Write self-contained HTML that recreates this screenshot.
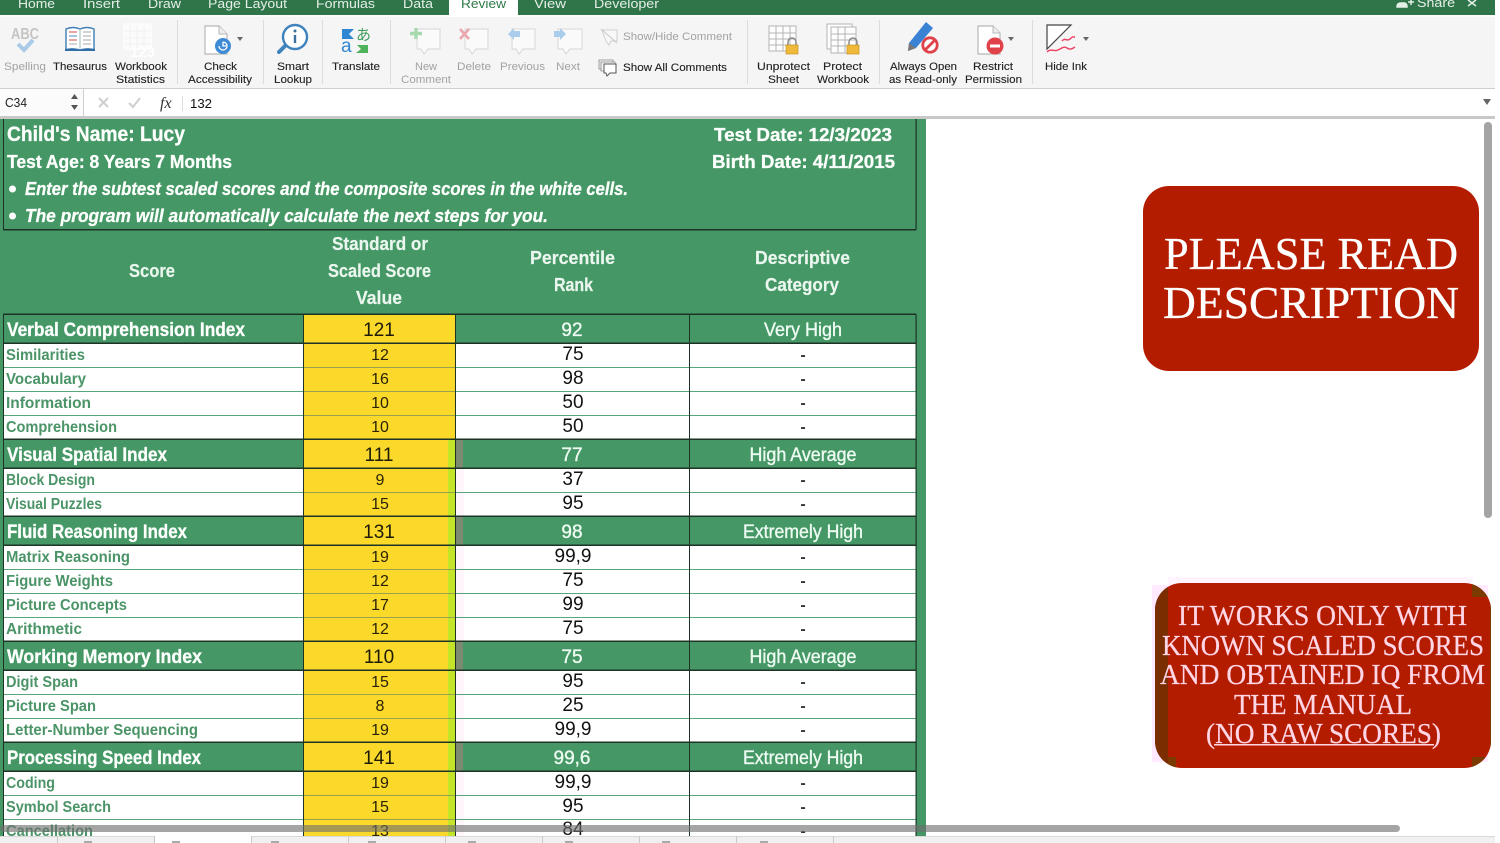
<!DOCTYPE html>
<html><head><meta charset="utf-8"><title>Workbook</title>
<style>
html,body{margin:0;padding:0;background:#fff;width:1500px;height:843px;overflow:hidden}
svg{display:block;position:absolute;left:0;top:0}
text{font-family:"Liberation Sans",sans-serif;white-space:pre}
.t{font-size:13px;fill:#e4efe7;font-weight:400}
.r{font-size:11px;fill:#222;stroke:#222;stroke-width:.12px}
.d{font-size:11px;fill:#a2a2a2}
.w{font-weight:700;fill:#fdfffd;stroke:#fdfffd;stroke-width:.3px}
.h{fill:#eaf6ee;stroke:#eaf6ee;stroke-width:.2px}
.g{font-size:19px;font-weight:700;fill:#fdfffd;stroke:#fdfffd;stroke-width:.3px}
.gm{font-size:19px;fill:#eefbf2;stroke:#eefbf2;stroke-width:.35px;text-anchor:middle}
.v{font-size:19px;fill:#1c1a08;text-anchor:middle}
.s{font-size:16px;font-weight:700;fill:#4b9467}
.n{font-size:16px;fill:#2a2208;text-anchor:middle}
.p{font-size:19px;fill:#111;text-anchor:middle}
.m{font-size:16px;font-weight:700;fill:#333;text-anchor:middle}
.se{font-family:"Liberation Serif",serif}
</style></head>
<body>
<svg width="1500" height="843" viewBox="0 0 1500 843" xmlns="http://www.w3.org/2000/svg">
<defs><clipPath id="c2"><rect x="1155" y="583" width="336" height="185" rx="27"/></clipPath></defs>
<g style="filter:blur(.35px)">
<!-- title bar -->
<rect x="0" y="0" width="1495" height="15" fill="#30754a"/>
<rect x="449" y="0" width="69" height="16" fill="#fff"/>
<text class="t" x="18" y="8" textLength="37" lengthAdjust="spacingAndGlyphs">Home</text>
<text class="t" x="83" y="8" textLength="37" lengthAdjust="spacingAndGlyphs">Insert</text>
<text class="t" x="148" y="8" textLength="33" lengthAdjust="spacingAndGlyphs">Draw</text>
<text class="t" x="208" y="8" textLength="79" lengthAdjust="spacingAndGlyphs">Page Layout</text>
<text class="t" x="316" y="8" textLength="59" lengthAdjust="spacingAndGlyphs">Formulas</text>
<text class="t" x="403" y="8" textLength="30" lengthAdjust="spacingAndGlyphs">Data</text>
<text class="t" x="461" y="8" textLength="45" lengthAdjust="spacingAndGlyphs" style="fill:#2f7a4a">Review</text>
<text class="t" x="534" y="8" textLength="32" lengthAdjust="spacingAndGlyphs">View</text>
<text class="t" x="594" y="8" textLength="65" lengthAdjust="spacingAndGlyphs">Developer</text>
<text class="t" x="1417" y="7" textLength="38" lengthAdjust="spacingAndGlyphs">Share</text>
<path d="M1397 7q0-4 4-4h3q3 0 3 4zM1408 2h6M1411 -1v6" fill="#e4efe7" stroke="#e4efe7" stroke-width="1.5"/>
<path d="M1468 0l8 6M1476 0l-8 6" stroke="#e4efe7" stroke-width="1.5" fill="none"/>

<!-- ribbon -->
<rect x="0" y="15" width="1495" height="2" fill="#fbfbfb"/>
<rect x="449" y="15" width="69" height="2" fill="#fff"/>
<rect x="0" y="17" width="1495" height="71" fill="#f5f5f5"/>
<rect x="0" y="88" width="1495" height="1" fill="#cfcfcf"/>
<g fill="#dcdcdc">
<rect x="177" y="20" width="1" height="64"/><rect x="263" y="20" width="1" height="64"/><rect x="322" y="20" width="1" height="64"/><rect x="390" y="20" width="1" height="64"/><rect x="747" y="20" width="1" height="64"/><rect x="879" y="20" width="1" height="64"/><rect x="1032" y="20" width="1" height="64"/>
</g>
<!-- ribbon labels -->
<text class="d" x="4" y="70" textLength="42" lengthAdjust="spacingAndGlyphs">Spelling</text>
<text class="r" x="53" y="70" textLength="54" lengthAdjust="spacingAndGlyphs">Thesaurus</text>
<text class="r" x="115" y="70" textLength="52" lengthAdjust="spacingAndGlyphs">Workbook</text>
<text class="r" x="116" y="83" textLength="49" lengthAdjust="spacingAndGlyphs">Statistics</text>
<text class="r" x="204" y="70" textLength="33" lengthAdjust="spacingAndGlyphs">Check</text>
<text class="r" x="188" y="83" textLength="64" lengthAdjust="spacingAndGlyphs">Accessibility</text>
<text class="r" x="277" y="70" textLength="32" lengthAdjust="spacingAndGlyphs">Smart</text>
<text class="r" x="274" y="83" textLength="38" lengthAdjust="spacingAndGlyphs">Lookup</text>
<text class="r" x="332" y="70" textLength="48" lengthAdjust="spacingAndGlyphs">Translate</text>
<text class="d" x="415" y="70" textLength="22" lengthAdjust="spacingAndGlyphs">New</text>
<text class="d" x="401" y="83" textLength="50" lengthAdjust="spacingAndGlyphs">Comment</text>
<text class="d" x="457" y="70" textLength="34" lengthAdjust="spacingAndGlyphs">Delete</text>
<text class="d" x="500" y="70" textLength="45" lengthAdjust="spacingAndGlyphs">Previous</text>
<text class="d" x="556" y="70" textLength="24" lengthAdjust="spacingAndGlyphs">Next</text>
<text class="d" x="623" y="40" textLength="109" lengthAdjust="spacingAndGlyphs">Show/Hide Comment</text>
<text class="r" x="623" y="71" textLength="104" lengthAdjust="spacingAndGlyphs">Show All Comments</text>
<text class="r" x="757" y="70" textLength="53" lengthAdjust="spacingAndGlyphs">Unprotect</text>
<text class="r" x="768" y="83" textLength="31" lengthAdjust="spacingAndGlyphs">Sheet</text>
<text class="r" x="823" y="70" textLength="39" lengthAdjust="spacingAndGlyphs">Protect</text>
<text class="r" x="817" y="83" textLength="52" lengthAdjust="spacingAndGlyphs">Workbook</text>
<text class="r" x="890" y="70" textLength="67" lengthAdjust="spacingAndGlyphs">Always Open</text>
<text class="r" x="889" y="83" textLength="68" lengthAdjust="spacingAndGlyphs">as Read-only</text>
<text class="r" x="973" y="70" textLength="40" lengthAdjust="spacingAndGlyphs">Restrict</text>
<text class="r" x="965" y="83" textLength="57" lengthAdjust="spacingAndGlyphs">Permission</text>
<text class="r" x="1045" y="70" textLength="42" lengthAdjust="spacingAndGlyphs">Hide Ink</text>

<!-- Spelling icon -->
<text x="11" y="39" font-size="16" font-weight="700" fill="#c4c4c4" textLength="28" lengthAdjust="spacingAndGlyphs">ABC</text>
<path d="M18 44l6 6 9-10" fill="none" stroke="#a9cbe8" stroke-width="4"/>
<!-- Thesaurus -->
<path d="M66 29q7-3 14 0q7-3 14 0v21q-7-2-14 0q-7-2-14 0z" fill="#fff" stroke="#3f7fb5" stroke-width="1.400"/>
<path d="M65 49q8-2 15 1q7-3 15-1v2H65z" fill="#2f6ea6"/>
<path d="M80 29v20" stroke="#9bb" stroke-width="1"/>
<path d="M69 32h8" stroke="#d66" stroke-width="1.200"/><path d="M69 36h8" stroke="#6a9fd0" stroke-width="1.200"/><path d="M69 40h8" stroke="#d66" stroke-width="1.200"/><path d="M69 44h8" stroke="#b9b9b9" stroke-width="1.200"/>
<path d="M83 32h8M83 36h8M83 40h8M83 44h8" stroke="#b9b9b9" stroke-width="1.200"/>
<!-- Workbook stats (washed out) -->
<rect x="123" y="23" width="29" height="27" rx="3" fill="#fbfbfb"/>
<path d="M130 26v22M137 26v22M144 26v22M125 31h25M125 38h25M125 44h25" stroke="#f0f0f0" stroke-width="1"/>
<text x="130" y="57" font-size="15" font-weight="700" fill="#fff">123</text>
<!-- Accessibility -->
<path d="M205 26h14l8 8v20h-22z" fill="#fff" stroke="#b8b8b8" stroke-width="1.200"/>
<path d="M219 26v8h8" fill="#eee" stroke="#b8b8b8" stroke-width="1"/>
<circle cx="223" cy="46" r="8" fill="#3d8ad6"/>
<path d="M219 46a4 4 0 1 0 4-4M223 42v4h3" stroke="#fff" stroke-width="1.300" fill="none"/>
<path d="M237 37h6l-3 4z" fill="#666"/>
<!-- Smart Lookup -->
<circle cx="295" cy="37" r="12" fill="#fff" stroke="#3f83bd" stroke-width="2.400"/>
<path d="M285 46l-6 6" stroke="#3f83bd" stroke-width="4" stroke-linecap="round"/>
<circle cx="295" cy="31" r="1.500" fill="#3b6f9e"/><path d="M295 35v8" stroke="#3b6f9e" stroke-width="2.400"/>
<!-- Translate -->
<path d="M342 29h12l-5 5 5 5h-12z" fill="#2f86d3"/>
<text x="341" y="52" font-size="19" fill="#2f86d3">a</text>
<text x="356" y="40" font-size="15" fill="#3c9c5a" style="font-family:'Noto Sans CJK JP',sans-serif">あ</text>
<path d="M368 45v8h-12l5-4-4-4z" fill="#4fb35c"/>
<!-- Comment icons -->
<g fill="#fafafa" stroke="#d6d6d6" stroke-width="1">
<path d="M417 29h23v20h-12l-4 5-3-5h-4z"/>
<path d="M465 29h23v20h-12l-4 5-3-5h-4z"/>
<path d="M512 29h23v20h-12l-4 5-3-5h-4z"/>
<path d="M558 29h24v20h-12l-4 5-3-5h-5z"/>
</g>
<path d="M416 28v11M410 33.500h12" stroke="#a8d8ae" stroke-width="3.400"/>
<path d="M460 29l9 10M469 29l-9 10" stroke="#eba5ac" stroke-width="2.600"/>
<path d="M508 34l6-6v3h6v6h-6v3z" fill="#abcdec"/>
<path d="M566 34l-6-6v3h-6v6h6v3z" fill="#abcdec"/>
<!-- show/hide -->
<path d="M602 30h15v11h-6l-2 4-3-4z" fill="#f8f8f8" stroke="#cfcfcf"/>
<path d="M601 29l16 14" stroke="#c8c8c8"/>
<path d="M599 60h14v9h-14z" fill="#f4f4f4" stroke="#888" stroke-width=".8"/>
<path d="M601 62h14v9h-14z" fill="#f4f4f4" stroke="#888" stroke-width=".8"/>
<path d="M604 64h12v9h-6l-3 3-1-3h-2z" fill="#fff" stroke="#555" stroke-width="1"/>
<!-- Unprotect -->
<g fill="#fdfdfd" stroke="#b5b5b5" stroke-width="1">
<rect x="769" y="26" width="27" height="25"/>
<path d="M769 33h27M769 39h27M769 45h27M776 26v25M783 26v25M790 26v25" fill="none"/>
<rect x="827" y="24" width="25" height="25"/>
<rect x="831" y="27" width="25" height="26"/>
<path d="M831 34h25M831 40h25M831 46h25M838 27v26M845 27v26" fill="none"/>
</g>
<path d="M788 46v-4a4 4 0 0 1 8 0v4" fill="none" stroke="#888" stroke-width="1.500"/>
<rect x="786" y="45" width="12" height="9" fill="#f0b93a" stroke="#c89522" stroke-width=".7"/>
<path d="M849 46v-4a4 4 0 0 1 8 0v4" fill="none" stroke="#888" stroke-width="1.500"/>
<rect x="847" y="45" width="12" height="9" fill="#f0b93a" stroke="#c89522" stroke-width=".7"/>
<!-- Always open -->
<path d="M909 43l-1 8 8-3 17-20-7-6z" fill="#3a82d4"/>
<path d="M909 43l-1 8 8-3z" fill="#777"/>
<circle cx="930" cy="45" r="7.200" fill="#fff" stroke="#e0424a" stroke-width="2.800"/>
<path d="M925 50l10-10" stroke="#e0424a" stroke-width="2.800"/>
<!-- Restrict -->
<path d="M978 26h15l7 7v21h-22z" fill="#fff" stroke="#b8b8b8" stroke-width="1.200"/>
<path d="M993 26v7h7" fill="#eee" stroke="#b8b8b8"/>
<circle cx="995" cy="46" r="8.500" fill="#e0424a"/>
<rect x="990" y="44.500" width="10" height="3" fill="#fff"/>
<path d="M1008 37h6l-3 4z" fill="#666"/>
<!-- Hide ink -->
<path d="M1047 25h24l-24 24z" fill="#fff" stroke="#444" stroke-width="1.200"/>
<path d="M1062 41c3-4 5 1 8-2s3-2 5-2M1047 52c4-4 7 0 11-2s6-4 9-2 5 1 8-1" stroke="#ee3e60" stroke-width="1.400" fill="none"/>
<path d="M1083 37h6l-3 4z" fill="#666"/>

<!-- formula bar -->
<rect x="0" y="89" width="1495" height="27" fill="#fff"/>
<rect x="0" y="89" width="84" height="27" fill="#fbfbfb"/>
<rect x="83" y="89" width="1" height="27" fill="#cfcfcf"/>
<text x="5" y="107" font-size="13" fill="#222" textLength="22" lengthAdjust="spacingAndGlyphs">C34</text>
<path d="M71 99h7l-3.500-5zM71 105h7l-3.500 5z" fill="#555"/>
<path d="M99 98l9 9M108 98l-9 9" stroke="#cfcfcf" stroke-width="2" fill="none"/>
<path d="M129 103l4 4 7-9" stroke="#cfcfcf" stroke-width="2" fill="none"/>
<text x="160" y="108" font-size="16" font-style="italic" fill="#333" style="font-family:'Liberation Serif',serif">fx</text>
<rect x="182" y="96" width="1" height="15" fill="#ddd"/>
<text x="190" y="108" font-size="13" fill="#111" textLength="22" lengthAdjust="spacingAndGlyphs">132</text>
<path d="M1483 99h8l-4 6z" fill="#666"/>
<rect x="0" y="116" width="1495" height="3" fill="#c8c8c8"/>

<!-- sheet -->
<rect x="0" y="119" width="926" height="717" fill="#459866"/>

<!-- white rows -->
<g fill="#fff">
<rect x="4" y="343" width="912" height="96"/>
<rect x="4" y="468" width="912" height="48"/>
<rect x="4" y="545" width="912" height="96"/>
<rect x="4" y="670" width="912" height="72"/>
<rect x="4" y="771" width="912" height="65"/>
</g>
<!-- yellow column -->
<rect x="304" y="314" width="151" height="522" fill="#fbd92b"/>
<rect x="448" y="439" width="7" height="397" fill="#c4e42a"/>
<g fill="#7d8a72">
<rect x="455" y="440" width="8" height="28"/><rect x="455" y="517" width="8" height="28"/><rect x="455" y="642" width="8" height="28"/><rect x="455" y="743" width="8" height="28"/>
</g>
<g fill="#fff6fb">
<rect x="456" y="468" width="8" height="48"/><rect x="456" y="545" width="8" height="96"/><rect x="456" y="670" width="8" height="72"/><rect x="456" y="771" width="8" height="65"/>
</g>

<!-- thin rows -->
<g fill="#58a67a">
<rect x="4" y="367" width="912" height="1"/><rect x="4" y="391" width="912" height="1"/><rect x="4" y="415" width="912" height="1"/>
<rect x="4" y="492" width="912" height="1"/>
<rect x="4" y="569" width="912" height="1"/><rect x="4" y="593" width="912" height="1"/><rect x="4" y="617" width="912" height="1"/>
<rect x="4" y="694" width="912" height="1"/><rect x="4" y="718" width="912" height="1"/>
<rect x="4" y="795" width="912" height="1"/><rect x="4" y="819" width="912" height="1"/>
</g>
<g fill="#9aa050">
<rect x="304" y="367" width="151" height="1"/><rect x="304" y="391" width="151" height="1"/><rect x="304" y="415" width="151" height="1"/>
<rect x="304" y="492" width="151" height="1"/>
<rect x="304" y="569" width="151" height="1"/><rect x="304" y="593" width="151" height="1"/><rect x="304" y="617" width="151" height="1"/>
<rect x="304" y="694" width="151" height="1"/><rect x="304" y="718" width="151" height="1"/>
<rect x="304" y="795" width="151" height="1"/><rect x="304" y="819" width="151" height="1"/>
</g>
<!-- black lines -->
<g fill="#1c3326">
<rect x="3" y="229" width="913" height="1.500"/>
<rect x="3" y="119" width="1" height="111"/><rect x="915.500" y="119" width="1.200" height="111"/>
<rect x="3" y="313.500" width="913" height="1.500"/><rect x="3" y="342.500" width="913" height="1.500"/>
<rect x="3" y="438.500" width="913" height="1.500"/><rect x="3" y="467.500" width="913" height="1.500"/>
<rect x="3" y="515.500" width="913" height="1.500"/><rect x="3" y="544.500" width="913" height="1.500"/>
<rect x="3" y="640.500" width="913" height="1.500"/><rect x="3" y="669.500" width="913" height="1.500"/>
<rect x="3" y="741.500" width="913" height="1.500"/><rect x="3" y="770.500" width="913" height="1.500"/>
<rect x="3" y="314" width="1" height="522"/><rect x="303" y="314" width="1" height="522"/><rect x="455" y="314" width="1" height="522"/><rect x="689" y="314" width="1" height="522"/><rect x="915.500" y="314" width="1.200" height="522"/>
</g>

<!-- heading block -->
<text class="w" x="7" y="141" font-size="21" textLength="178" lengthAdjust="spacingAndGlyphs">Child's Name: Lucy</text>
<text class="w" x="7" y="168" font-size="18" textLength="225" lengthAdjust="spacingAndGlyphs">Test Age: 8 Years 7 Months</text>
<circle cx="12.500" cy="189" r="3.500" fill="#fff"/>
<circle cx="12.500" cy="216" r="3.500" fill="#fff"/>
<text class="w" x="25" y="195" font-size="18" font-style="italic" textLength="603" lengthAdjust="spacingAndGlyphs">Enter the subtest scaled scores and the composite scores in the white cells.</text>
<text class="w" x="25" y="222" font-size="18" font-style="italic" textLength="523" lengthAdjust="spacingAndGlyphs">The program will automatically calculate the next steps for you.</text>
<text class="w" x="714" y="141" font-size="18" textLength="178" lengthAdjust="spacingAndGlyphs">Test Date: 12/3/2023</text>
<text class="w" x="712" y="168" font-size="18" textLength="183" lengthAdjust="spacingAndGlyphs">Birth Date: 4/11/2015</text>

<text class="w h" x="129" y="277" font-size="18" textLength="46" lengthAdjust="spacingAndGlyphs">Score</text>
<text class="w h" x="332" y="250" font-size="18" textLength="96" lengthAdjust="spacingAndGlyphs">Standard or</text>
<text class="w h" x="328" y="277" font-size="18" textLength="103" lengthAdjust="spacingAndGlyphs">Scaled Score</text>
<text class="w h" x="356" y="304" font-size="18" textLength="46" lengthAdjust="spacingAndGlyphs">Value</text>
<text class="w h" x="530" y="264" font-size="18" textLength="85" lengthAdjust="spacingAndGlyphs">Percentile</text>
<text class="w h" x="554" y="291" font-size="18" textLength="39" lengthAdjust="spacingAndGlyphs">Rank</text>
<text class="w h" x="755" y="264" font-size="18" textLength="95" lengthAdjust="spacingAndGlyphs">Descriptive</text>
<text class="w h" x="765" y="291" font-size="18" textLength="74" lengthAdjust="spacingAndGlyphs">Category</text>

<!-- group rows -->
<text class="g" x="7" y="336" textLength="238" lengthAdjust="spacingAndGlyphs">Verbal Comprehension Index</text>
<text class="v" x="379" y="336">121</text><text class="gm" x="572" y="336">92</text><text class="gm" x="803" y="336" textLength="78" lengthAdjust="spacingAndGlyphs">Very High</text>
<text class="g" x="7" y="461" textLength="160" lengthAdjust="spacingAndGlyphs">Visual Spatial Index</text>
<text class="v" x="379" y="461">111</text><text class="gm" x="572" y="461">77</text><text class="gm" x="803" y="461" textLength="107" lengthAdjust="spacingAndGlyphs">High Average</text>
<text class="g" x="7" y="538" textLength="180" lengthAdjust="spacingAndGlyphs">Fluid Reasoning Index</text>
<text class="v" x="379" y="538">131</text><text class="gm" x="572" y="538">98</text><text class="gm" x="803" y="538" textLength="120" lengthAdjust="spacingAndGlyphs">Extremely High</text>
<text class="g" x="7" y="663" textLength="195" lengthAdjust="spacingAndGlyphs">Working Memory Index</text>
<text class="v" x="379" y="663">110</text><text class="gm" x="572" y="663">75</text><text class="gm" x="803" y="663" textLength="107" lengthAdjust="spacingAndGlyphs">High Average</text>
<text class="g" x="7" y="764" textLength="194" lengthAdjust="spacingAndGlyphs">Processing Speed Index</text>
<text class="v" x="379" y="764">141</text><text class="gm" x="572" y="764">99,6</text><text class="gm" x="803" y="764" textLength="120" lengthAdjust="spacingAndGlyphs">Extremely High</text>

<!-- sub rows -->
<text class="s" x="6" y="360" textLength="79" lengthAdjust="spacingAndGlyphs">Similarities</text><text class="n" x="380" y="360">12</text><text class="p" x="573" y="360">75</text><text class="m" x="803" y="360">-</text>
<text class="s" x="6" y="384" textLength="80" lengthAdjust="spacingAndGlyphs">Vocabulary</text><text class="n" x="380" y="384">16</text><text class="p" x="573" y="384">98</text><text class="m" x="803" y="384">-</text>
<text class="s" x="6" y="408" textLength="85" lengthAdjust="spacingAndGlyphs">Information</text><text class="n" x="380" y="408">10</text><text class="p" x="573" y="408">50</text><text class="m" x="803" y="408">-</text>
<text class="s" x="6" y="432" textLength="111" lengthAdjust="spacingAndGlyphs">Comprehension</text><text class="n" x="380" y="432">10</text><text class="p" x="573" y="432">50</text><text class="m" x="803" y="432">-</text>

<text class="s" x="6" y="485" textLength="89" lengthAdjust="spacingAndGlyphs">Block Design</text><text class="n" x="380" y="485">9</text><text class="p" x="573" y="485">37</text><text class="m" x="803" y="485">-</text>
<text class="s" x="6" y="509" textLength="96" lengthAdjust="spacingAndGlyphs">Visual Puzzles</text><text class="n" x="380" y="509">15</text><text class="p" x="573" y="509">95</text><text class="m" x="803" y="509">-</text>

<text class="s" x="6" y="562" textLength="124" lengthAdjust="spacingAndGlyphs">Matrix Reasoning</text><text class="n" x="380" y="562">19</text><text class="p" x="573" y="562">99,9</text><text class="m" x="803" y="562">-</text>
<text class="s" x="6" y="586" textLength="107" lengthAdjust="spacingAndGlyphs">Figure Weights</text><text class="n" x="380" y="586">12</text><text class="p" x="573" y="586">75</text><text class="m" x="803" y="586">-</text>
<text class="s" x="6" y="610" textLength="121" lengthAdjust="spacingAndGlyphs">Picture Concepts</text><text class="n" x="380" y="610">17</text><text class="p" x="573" y="610">99</text><text class="m" x="803" y="610">-</text>
<text class="s" x="6" y="634" textLength="76" lengthAdjust="spacingAndGlyphs">Arithmetic</text><text class="n" x="380" y="634">12</text><text class="p" x="573" y="634">75</text><text class="m" x="803" y="634">-</text>

<text class="s" x="6" y="687" textLength="72" lengthAdjust="spacingAndGlyphs">Digit Span</text><text class="n" x="380" y="687">15</text><text class="p" x="573" y="687">95</text><text class="m" x="803" y="687">-</text>
<text class="s" x="6" y="711" textLength="90" lengthAdjust="spacingAndGlyphs">Picture Span</text><text class="n" x="380" y="711">8</text><text class="p" x="573" y="711">25</text><text class="m" x="803" y="711">-</text>
<text class="s" x="6" y="735" textLength="192" lengthAdjust="spacingAndGlyphs">Letter-Number Sequencing</text><text class="n" x="380" y="735">19</text><text class="p" x="573" y="735">99,9</text><text class="m" x="803" y="735">-</text>

<text class="s" x="6" y="788" textLength="49" lengthAdjust="spacingAndGlyphs">Coding</text><text class="n" x="380" y="788">19</text><text class="p" x="573" y="788">99,9</text><text class="m" x="803" y="788">-</text>
<text class="s" x="6" y="812" textLength="105" lengthAdjust="spacingAndGlyphs">Symbol Search</text><text class="n" x="380" y="812">15</text><text class="p" x="573" y="812">95</text><text class="m" x="803" y="812">-</text>
<text class="s" x="6" y="836" textLength="87" lengthAdjust="spacingAndGlyphs">Cancellation</text><text class="n" x="380" y="836">13</text><text class="p" x="573" y="835">84</text><text class="m" x="803" y="836">-</text>

<!-- bottom tabs -->
<rect x="0" y="836" width="1495" height="7" fill="#f0f0f0"/>
<rect x="0" y="836" width="1495" height="1" fill="#d8d8d8"/>
<rect x="154" y="836" width="97" height="7" fill="#fff"/>
<g fill="#c8c8c8">
<rect x="57" y="836" width="1" height="7"/><rect x="154" y="836" width="1" height="7"/><rect x="251" y="836" width="1" height="7"/><rect x="348" y="836" width="1" height="7"/><rect x="445" y="836" width="1" height="7"/><rect x="542" y="836" width="1" height="7"/><rect x="639" y="836" width="1" height="7"/><rect x="736" y="836" width="1" height="7"/><rect x="833" y="836" width="1" height="7"/>
</g>
<g fill="#aaa">
<rect x="84" y="841" width="8" height="2"/><rect x="172" y="841" width="8" height="2"/><rect x="271" y="841" width="8" height="2"/><rect x="368" y="841" width="8" height="2"/><rect x="468" y="841" width="8" height="2"/><rect x="565" y="841" width="8" height="2"/><rect x="662" y="841" width="8" height="2"/><rect x="760" y="841" width="8" height="2"/>
</g>

<!-- scrollbars -->
<rect x="0" y="825" width="1400" height="7" rx="3.500" fill="#6e6e6e" fill-opacity=".62"/>
<rect x="1484" y="122" width="8" height="396" rx="4" fill="#a4a4a4"/>

<!-- red box 1 -->
<rect x="1143" y="186" width="336" height="185" rx="26" fill="#b41c00"/>
<text class="se" x="1164" y="269" font-size="46" fill="#fff" stroke="#fff" stroke-width=".3" textLength="294" lengthAdjust="spacingAndGlyphs">PLEASE READ</text>
<text class="se" x="1163" y="318" font-size="46" fill="#fff" stroke="#fff" stroke-width=".3" textLength="296" lengthAdjust="spacingAndGlyphs">DESCRIPTION</text>

<!-- red box 2 -->
<rect x="1152" y="585" width="336" height="177" fill="#ffeaff"/>
<rect x="1168" y="577" width="305" height="8" fill="#fff4ff"/>
<rect x="1155" y="583" width="336" height="185" rx="27" fill="#b41c00"/>
<g clip-path="url(#c2)">
<rect x="1155" y="583" width="13" height="185" fill="#7a2e00"/>
<rect x="1472" y="583" width="19" height="14" fill="#7a3a00"/>
<rect x="1472" y="757" width="19" height="11" fill="#7a3a00"/>
<rect x="1168" y="757" width="8" height="11" fill="#7a3a00"/>
<rect x="1490" y="597" width="1" height="160" fill="#7a3a00"/>
</g>
<text class="se" x="1178" y="625" font-size="28" fill="#ffd6e6" stroke="#ffd6e6" stroke-width=".2" textLength="289" lengthAdjust="spacingAndGlyphs">IT WORKS ONLY WITH</text>
<text class="se" x="1162" y="655" font-size="28" fill="#ffd6e6" stroke="#ffd6e6" stroke-width=".2" textLength="322" lengthAdjust="spacingAndGlyphs">KNOWN SCALED SCORES</text>
<text class="se" x="1160" y="684" font-size="28" fill="#ffd6e6" stroke="#ffd6e6" stroke-width=".2" textLength="325" lengthAdjust="spacingAndGlyphs">AND OBTAINED IQ FROM</text>
<text class="se" x="1234" y="714" font-size="28" fill="#ffd6e6" stroke="#ffd6e6" stroke-width=".2" textLength="178" lengthAdjust="spacingAndGlyphs">THE MANUAL</text>
<text class="se" x="1206" y="743" font-size="28" fill="#ffd6e6" stroke="#ffd6e6" stroke-width=".2" textLength="235" lengthAdjust="spacingAndGlyphs">(NO RAW SCORES)</text>
<rect x="1214" y="744" width="220" height="1.500" fill="#ffd6e6"/>
</g>
</svg>
</body></html>
